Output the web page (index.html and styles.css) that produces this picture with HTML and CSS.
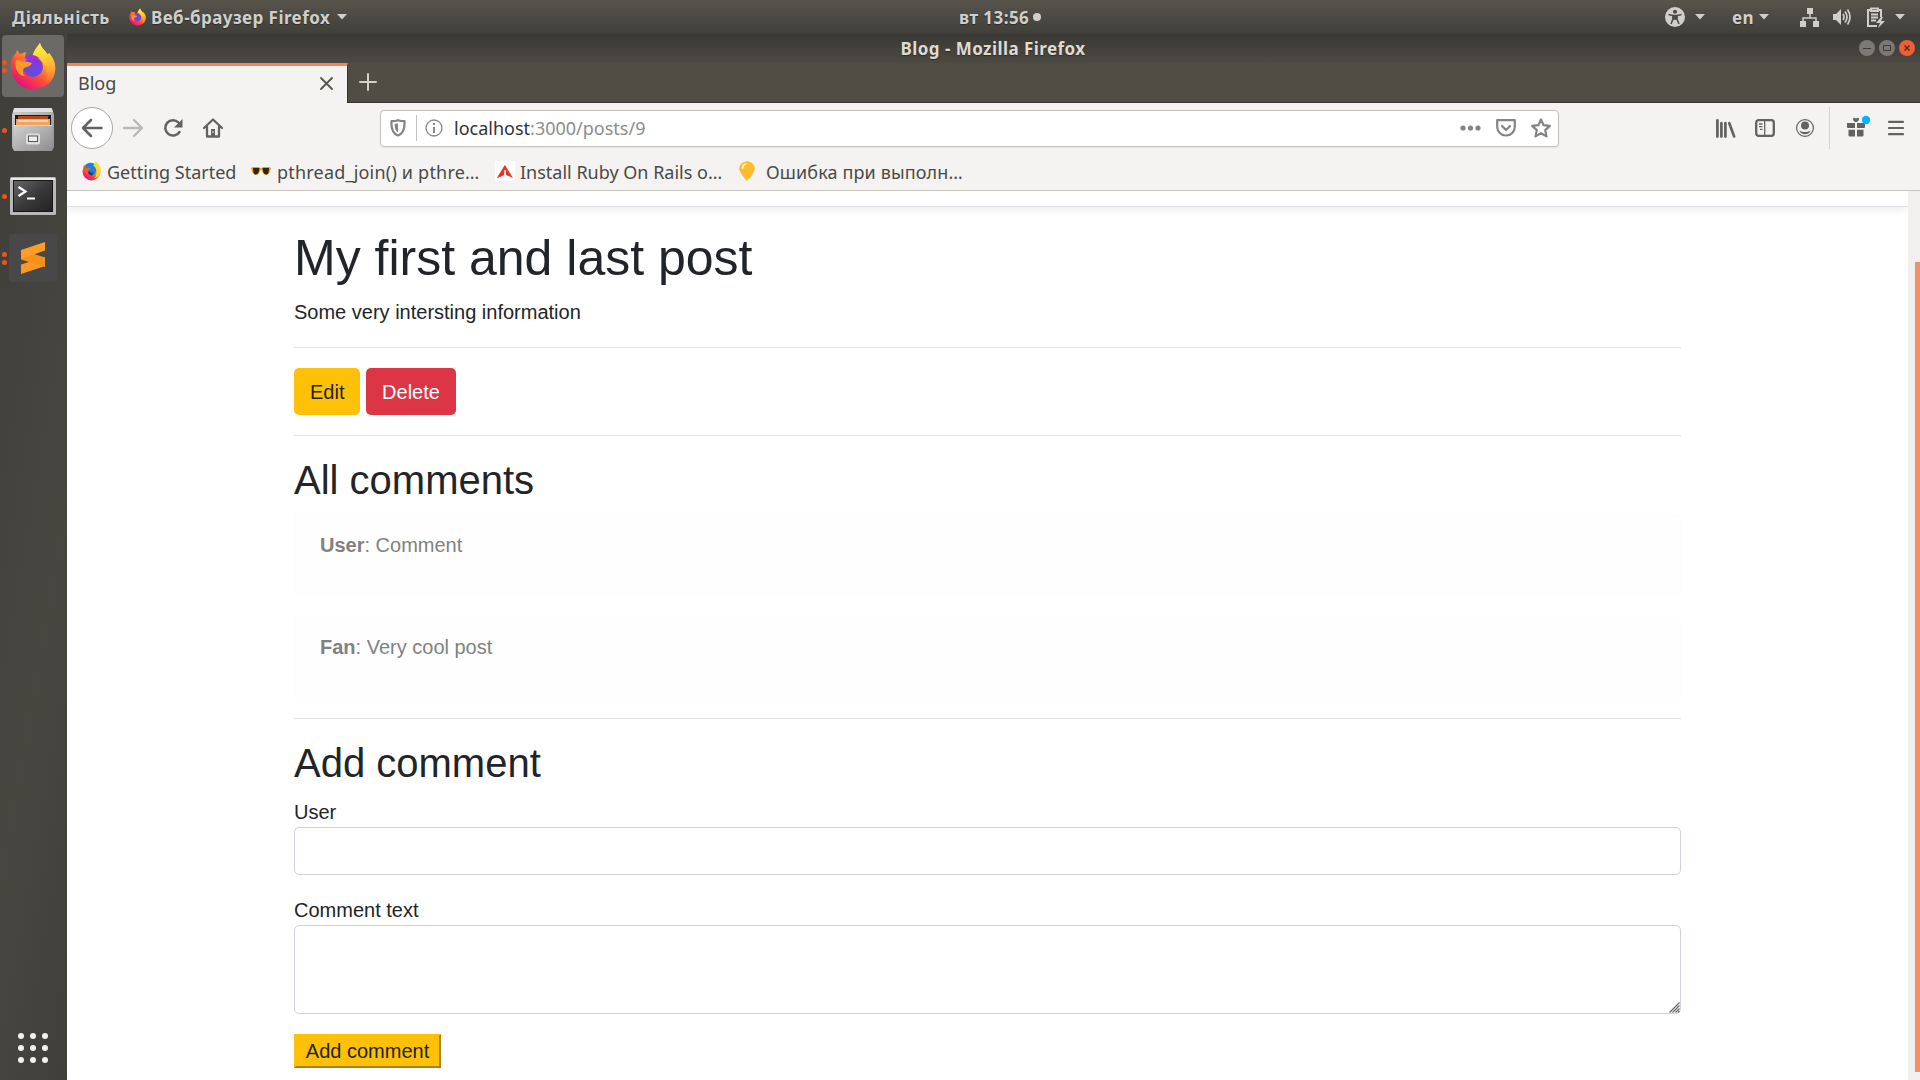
FILE: index.html
```html
<!DOCTYPE html>
<html lang="uk">
<head>
<meta charset="utf-8">
<title>Blog</title>
<link rel="stylesheet" href="styles.css">
</head>
<body>
<svg class="defs" width="0" height="0">
  <defs>
    <linearGradient id="fxFlame" x1=".85" y1=".1" x2=".25" y2=".95"><stop offset="0" stop-color="#fff44f"/><stop offset=".35" stop-color="#ffa32b"/><stop offset=".65" stop-color="#ff4b3a"/><stop offset="1" stop-color="#e5107c"/></linearGradient>
    <linearGradient id="fxTail" x1=".3" y1="0" x2=".5" y2="1"><stop offset="0" stop-color="#fff44f"/><stop offset=".5" stop-color="#ffc52f"/><stop offset="1" stop-color="#ff7139" stop-opacity="0"/></linearGradient>
    <linearGradient id="fxGlobe" x1=".7" y1="0" x2=".4" y2="1"><stop offset="0" stop-color="#9a28d8"/><stop offset=".5" stop-color="#7542e5"/><stop offset="1" stop-color="#5b50d8"/></linearGradient>
    <linearGradient id="steel" x1="0" y1="0" x2="1" y2="1"><stop offset="0" stop-color="#d0d0d0"/><stop offset="1" stop-color="#8e8e8e"/></linearGradient>
    <linearGradient id="screen" x1="0" y1="0" x2="1" y2="1"><stop offset="0" stop-color="#666"/><stop offset=".5" stop-color="#3a3a3a"/><stop offset="1" stop-color="#222"/></linearGradient>
    <symbol id="firefox" viewBox="0 0 46 48">
      <path d="M1 27C0 19 3 14 6 11l1-3 3 4 6-2-1 5 8 1C23 9 28 4 30 1c1 5 5 7 8 12l1-2c5 6 7 12 6 18-1 11-10 18-22 18S2 39 1 27z" fill="url(#fxFlame)"/>
      <path d="M22 16C23 9 28 4 30 1c1 5 5 7 8 12l1-2c5 6 7 12 6 18-2 8-6 12-12 14 6-8 5-17-1-24-3-2-6-3-10-3z" fill="url(#fxTail)"/>
      <circle cx="23" cy="25" r="10" fill="url(#fxGlobe)"/>
      <path d="M6 18c4 1 10 1 16 3-1 3-5 4-8 5-2 3-1 6 1 8-7 0-11-8-9-16z" fill="#ff9a28"/>
      <path d="M14 16c4-4 12-4 16 1-4-2-7-1-8 2z" fill="#a42de0"/>
    </symbol>
    <symbol id="caret" viewBox="0 0 10 6"><path d="M0 0h10L5 5.500z" fill="currentColor"/></symbol>
  </defs>
</svg>
<div class="desktop">
  <header class="panel">
    <div class="panel-side">
      <span class="panel-text activities">Діяльність</span>
      <svg class="panel-fx" width="17" height="18"><use href="#firefox"/></svg>
      <span class="panel-text app-name">Веб-браузер Firefox</span>
      <svg class="caret" width="10" height="6"><use href="#caret"/></svg>
    </div>
    <div class="panel-clock"><span class="panel-text clock">вт 13:56</span><i class="clock-dot"></i></div>
    <div class="panel-side panel-end">
      <svg width="20" height="20" viewBox="0 0 20 20"><circle cx="10" cy="10" r="10" fill="#d0cfcc"/><circle cx="10" cy="4.800" r="2" fill="#4a4943"/><path d="M3.500 7.500L8 8.500v3.500L6 17M16.500 7.500L12 8.500v3.500l2 5" fill="none" stroke="#4a4943" stroke-width="1.500"/><path d="M7.500 7.800h5v5h-5z" fill="#4a4943"/></svg>
      <svg class="caret c1" width="10" height="6"><use href="#caret"/></svg>
      <span class="panel-text lang">en</span>
      <svg class="caret c2" width="10" height="6"><use href="#caret"/></svg>
      <svg class="net" width="20" height="20" viewBox="0 0 20 20"><path d="M7 1h6v6H7zM0 14h6v6H0zM13 14h6v6h-6z" fill="#d0cfcc"/><path d="M10 7v4M3 14v-3h13v3" fill="none" stroke="#d0cfcc" stroke-width="1.500"/></svg>
      <svg class="vol" width="20" height="20" viewBox="0 0 20 20"><path d="M1 7h3l5-5v16l-5-5H1z" fill="#d0cfcc"/><path d="M11 7q2 3 0 6M13 4.500q4 5.500 0 11M15.500 2.500q5 7.500 0 15" fill="none" stroke="#d0cfcc" stroke-width="1.700"/></svg>
      <svg class="bat" width="20" height="21" viewBox="0 0 20 21"><path d="M5 3H2v16h9M12 3h3v7M5 1.500h7V4H5zM5 7.500h7M5 10.500h7M5 13.500h5" fill="none" stroke="#d0cfcc" stroke-width="2"/><path d="M15 10l-5 6h4l-2 5 7-7h-4l2-4z" fill="#d0cfcc"/></svg>
      <svg class="caret c3" width="10" height="6"><use href="#caret"/></svg>
    </div>
  </header>

  <div class="workspace">
    <nav class="dock">
      <div class="dock-item active"><span class="dots"><i></i><i></i></span><svg width="46" height="48"><use href="#firefox"/></svg></div>
      <div class="dock-item files"><span class="dots"><i></i></span>
        <svg width="42" height="46" viewBox="0 0 42 46"><path d="M2 1h38l2 7v32l-2 4H2l-2-4V8z" fill="url(#steel)"/><path d="M3 1h36l2 4H1z" fill="#e2e2e2"/><path d="M3 8h36v12H3z" fill="#1f1a17"/><path d="M6 9h30v3H6z" fill="#b54a18"/><path d="M4 12h34v6H4z" fill="#f3a45b"/><path d="M6 14h30" stroke="#fff"/><path d="M2 18h38v26H2z" fill="url(#steel)"/><path d="M2 18.500h38" stroke="#ddd"/><rect x="14" y="26.500" width="14" height="11" rx="2" fill="#ddd"/><rect x="16.500" y="29" width="9" height="5.500" fill="#eee" stroke="#555"/></svg></div>
      <div class="dock-item term"><span class="dots"><i></i></span>
        <svg width="46" height="38" viewBox="0 0 46 38"><rect width="46" height="38" rx="1.500" fill="#b9b9b9"/><path d="M1 1h44v2H1z" fill="#e9e9e9"/><rect x="3.500" y="3.500" width="39" height="31" fill="url(#screen)" stroke="#161616"/><path d="M8.500 10l7 4.500-7 4.500" fill="none" stroke="#fff" stroke-width="2.200"/><path d="M17 21.500h8" stroke="#fff" stroke-width="2"/></svg></div>
      <div class="dock-item subl"><span class="dots"><i></i><i></i></span>
        <svg width="48" height="48" viewBox="0 0 48 48"><rect width="48" height="48" rx="3" fill="#484848"/><path d="M12 30.500l24-7.500v9L12 40z" fill="#ff9820"/><path d="M12 16v9.500L36 33v-9.500L22 19z" fill="#f5901c"/><path d="M12 16l24-8v8.500L12 25z" fill="#ff9e22"/></svg></div>
      <svg class="apps" width="30" height="30" viewBox="0 0 30 30" fill="#f2f1ef"><circle cx="3" cy="3" r="3"/><circle cx="15" cy="3" r="3"/><circle cx="27" cy="3" r="3"/><circle cx="3" cy="15" r="3"/><circle cx="15" cy="15" r="3"/><circle cx="27" cy="15" r="3"/><circle cx="3" cy="27" r="3"/><circle cx="15" cy="27" r="3"/><circle cx="27" cy="27" r="3"/></svg>
    </nav>

    <section class="window">
      <div class="titlebar">
        <span class="window-title">Blog - Mozilla Firefox</span>
        <div class="controls">
          <svg width="16" height="16" viewBox="0 0 16 16"><circle cx="8" cy="8" r="8" fill="#7b7973"/><path d="M4 8.500h8" stroke="#3c3b37"/></svg>
          <svg width="16" height="16" viewBox="0 0 16 16"><circle cx="8" cy="8" r="8" fill="#7b7973"/><path d="M4.500 5.500h7v5h-7z" fill="none" stroke="#3c3b37"/></svg>
          <svg width="16" height="16" viewBox="0 0 16 16"><circle cx="8" cy="8" r="8" fill="#ee5f33"/><path d="M5.500 5.500l5 5m0-5l-5 5" stroke="#4a2a1c" stroke-width="1.300"/></svg>
        </div>
      </div>
      <div class="tabstrip">
        <div class="tab"><span class="ui tab-title">Blog</span>
          <svg width="13" height="13" viewBox="0 0 13 13"><path d="M1 1l11 11M12 1L1 12" stroke="#56554f" stroke-width="1.800" stroke-linecap="round"/></svg></div>
        <svg class="newtab" width="18" height="18" viewBox="0 0 18 18"><path d="M9 1v16M1 9h16" stroke="#d3d1c9" stroke-width="2" stroke-linecap="round"/></svg>
      </div>
      <div class="toolbar">
        <div class="nav-buttons">
          <span class="back"><svg width="22" height="20" viewBox="0 0 22 20"><path d="M20.500 10H2M10 2l-8 8 8 8" fill="none" stroke="#636261" stroke-width="2.500" stroke-linecap="round" stroke-linejoin="round"/></svg></span>
          <svg class="fwd" width="22" height="20" viewBox="0 0 22 20"><path d="M2 10h18M12 2l8 8-8 8" fill="none" stroke="#bab9b7" stroke-width="2.400" stroke-linecap="round" stroke-linejoin="round"/></svg>
          <svg class="reload" width="20" height="20" viewBox="0 0 20 20"><path d="M15.500 4.500A7.700 7.700 0 1 0 16.500 14" fill="none" stroke="#636261" stroke-width="2.500" stroke-linecap="round"/><path d="M19.500 1v8.500H11z" fill="#636261"/></svg>
          <svg class="home" width="20" height="20" viewBox="0 0 20 20"><path d="M1 10l9-8.500L19 10M4 9v9.500h12V9" fill="none" stroke="#636261" stroke-width="2.300" stroke-linejoin="round" stroke-linecap="round"/><path d="M8 11h4v8H8z" fill="#636261"/><path d="M10 13v2" stroke="#f4f3f2"/></svg>
        </div>
        <div class="urlbar">
          <svg class="shield" width="16" height="18" viewBox="0 0 16 18"><path d="M8 1.200c2 .8 4 1 6.500 1C15 9 13 14.500 8 16.500 3 14.500 1 9 1.500 2.200 4 2.200 6 2 8 1.200z" fill="none" stroke="#858483" stroke-width="2.200" stroke-linejoin="round"/><path d="M8 4.500v9C5.500 12 4.600 9 4.600 5z" fill="#858483"/></svg>
          <i class="url-sep"></i>
          <svg class="info" width="18" height="18" viewBox="0 0 18 18"><circle cx="9" cy="9" r="8" fill="none" stroke="#8a8988" stroke-width="1.300"/><path d="M9 4v2M9 8v6" stroke="#8a8988" stroke-width="2"/></svg>
          <span class="ui url"><b>localhost</b>:3000/posts/9</span>
          <svg class="more" width="21" height="6" viewBox="0 0 21 6" fill="#858483"><circle cx="3" cy="3" r="2.600"/><circle cx="10.500" cy="3" r="2.600"/><circle cx="18" cy="3" r="2.600"/></svg>
          <svg class="pocket" width="20" height="18" viewBox="0 0 20 18"><path d="M1.200 1.200h17.600v6.500a8.800 8.800 0 0 1-17.600 0z" fill="none" stroke="#858483" stroke-width="2.200" stroke-linejoin="round"/><path d="M6 7l4 4 4-4" fill="none" stroke="#858483" stroke-width="2.200" stroke-linecap="round" stroke-linejoin="round"/></svg>
          <svg class="star" width="20" height="20" viewBox="0 0 20 20"><path d="M10 1.500l2.600 5.700 6.200.7-4.600 4.200 1.300 6.300L10 15.200l-5.500 3.200 1.300-6.300L1.200 7.900l6.200-.7z" fill="none" stroke="#858483" stroke-width="2.200" stroke-linejoin="round"/></svg>
        </div>
        <div class="tools">
          <svg class="lib" width="20" height="19" viewBox="0 0 20 19"><path d="M1.400 1.400v16.200M5.400 4.200v13.400M9.400 4.200v13.400M13.300 4.200l4.800 13.200" stroke="#636261" stroke-width="2.700" stroke-linecap="round" fill="none"/></svg>
          <svg class="side" width="20" height="18" viewBox="0 0 20 18"><rect x="1.200" y="1.200" width="17.600" height="15.600" rx="2.500" fill="none" stroke="#636261" stroke-width="2.300"/><path d="M9.700 2v14M4 5h3.500M4 7.700h3.500M5 10.400h2.500" stroke="#636261" stroke-width="1.300"/></svg>
          <svg class="acct" width="18" height="18" viewBox="0 0 18 18"><circle cx="9" cy="9" r="8.400" fill="none" stroke="#636261" stroke-width="1.200"/><circle cx="9" cy="6.500" r="4" fill="#636261"/><path d="M3.500 11.500c3 2 8 2 11 0-1 5-10 5-11 0z" fill="#636261"/></svg>
          <i class="tool-sep"></i>
          <svg class="gift" width="25" height="22" viewBox="0 0 25 22"><path d="M0 8h8v5H1q-1 0-1-1zM10 8h8v4q0 1-1 1h-7zM1.500 14.800H8v6.700H3q-1.500 0-1.500-1.500zM10 14.800h6.500V20q0 1.500-1.500 1.500h-5zM6 3.200q2-1 3 .6 1-1.600 3-.6.500 2-2 3.800H8Q5.500 5.200 6 3.200z" fill="#636261"/><circle cx="19" cy="5" r="4.200" fill="#00b3ff"/></svg>
          <svg class="menu" width="16" height="16" viewBox="0 0 16 16"><path d="M1 1.800h14M1 8h14M1 14.200h14" stroke="#636261" stroke-width="2.200" stroke-linecap="round"/></svg>
        </div>
      </div>
      <div class="bookmarks">
        <svg class="bi1" width="19" height="20" viewBox="0 0 19 20"><circle cx="9.500" cy="10.500" r="9" fill="url(#fxFlame)"/><circle cx="8.500" cy="8" r="6.300" fill="#1484e0"/><path d="M13 0q6 4 5.700 10-.7 6-6.700 7.500 4-4.500 2-9.500-1-2.500-3-4 2.500 0 2-4z" fill="#ffd92e"/><path d="M1.500 4q2 1 3 3 2-1 4 .5 0 1.500-2 2 1 3 5 2-2 3.500-5.500 2.500Q1 11 1.500 4z" fill="#f9552f"/><path d="M7 9.500q2 3 5 2l-2 3q-3 0-4-2.500z" fill="#17408f"/></svg>
        <span class="ui b1">Getting Started</span>
        <svg class="bi2" width="20" height="9" viewBox="0 0 20 9"><path d="M0 1l2-1h6l2 1.500L12 0h6l2 1-1.500 4.500q-3 4.500-6.500.5l-1.500-3h-1L8 6Q4.500 10 1.500 5.500z" fill="#e0a31b"/><path d="M2 1h6.500L7.500 6Q4.500 9 2.500 6zM11.500 1H18l-.5 5q-2 3-5 0z" fill="#33230f"/></svg>
        <span class="ui b2">pthread_join() и pthre…</span>
        <svg class="bi3" width="20" height="20" viewBox="0 0 20 20"><path d="M0 0h20v20H0z" fill="#fff"/><path d="M10 4l8 13-7-3V9h-2v5l-7 3z" fill="#e0392b"/><path d="M10 4L9 14l-7 3z" fill="#e0392b"/></svg>
        <span class="ui b3">Install Ruby On Rails o…</span>
        <svg class="bi4" width="16" height="20" viewBox="0 0 16 20"><path d="M8 0q8 2 8 8-2 6-8 12Q2 14 0 8 0 2 8 0z" fill="#fbbd2c"/><path d="M3.500 7q.5-3 3-4" stroke="#fff0a8" stroke-width="2" fill="none" stroke-linecap="round"/></svg>
        <span class="ui b4">Ошибка при выполн…</span>
      </div>
      <div class="viewport">
        <div class="page">
          <div class="site-nav"></div>
          <main class="container">
            <h1>My first and last post</h1>
            <p>Some very intersting information</p>
            <hr>
            <div class="actions"><a class="btn edit">Edit</a><a class="btn delete">Delete</a></div>
            <hr>
            <h2>All comments</h2>
            <div class="alert"><p><b>User</b>: Comment</p></div>
            <div class="alert"><p><b>Fan</b>: Very cool post</p></div>
            <hr>
            <h2>Add comment</h2>
            <form>
              <label for="user">User</label>
              <input id="user" class="field" type="text">
              <label for="text">Comment text</label>
              <div class="area-wrap"><textarea id="text" class="field area"></textarea>
              <svg class="grip" width="11" height="11" viewBox="0 0 11 11"><path d="M.5 10.500l10-10M3.500 10.500l7-7M6.500 10.500l4-4M9 10.500L10.500 9" stroke="#666" stroke-width="1.200"/></svg></div>
              <button class="submit" type="button">Add comment</button>
            </form>
          </main>
        </div>
        <div class="scrollbar"><div class="thumb"></div></div>
      </div>
    </section>
  </div>
</div>
</body>
</html>
```
FILE: styles.css
```css
* { box-sizing: border-box; }
body { margin: 0; overflow: hidden; background: #fff; font-family: "Liberation Sans", Arial, sans-serif; }
svg { display: block; flex: none; }
.defs { position: absolute; }
.desktop { width: 1920px; height: 1080px; display: flex; flex-direction: column; overflow: hidden; }

.panel { height: 34px; flex: none; display: grid; grid-template-columns: 959px auto 1fr; align-items: center; background: linear-gradient(#57544c, #403f3a); color: #d0cfcc; }
.panel-side { display: flex; align-items: center; padding-left: 12px; }
.panel-end { justify-content: flex-end; padding: 0 15px 0 0; }
.panel-text, .window-title { font: bold 17px/24px "Noto Sans", sans-serif; letter-spacing: .45px; white-space: nowrap; text-shadow: 0 1px 1px #2c2b28; }
.panel-text { padding-top: 1px; }
.activities { width: 97px; margin-right: 20px; }
.panel-fx { margin-right: 5px; }
.app-name { width: 181px; }
.caret { margin-left: 5px; }
.panel-clock { display: flex; align-items: center; gap: 4px; }
.clock { width: 70px; }
.clock-dot { width: 8px; height: 8px; border-radius: 50%; background: #d0cfcc; }
.c1 { margin: 0 27px 0 10px; }
.lang { width: 22px; }
.c2 { margin: 0 31px 0 5px; }
.vol { margin-left: 12px; }
.bat { margin-left: 14px; }
.c3 { margin-left: 9px; }

.workspace { flex: 1; min-height: 0; display: flex; }
.dock { width: 67px; flex: none; display: flex; flex-direction: column; background: linear-gradient(100deg, #3f3e39, #47463f 60%, #403f3a); }
.dock-item { position: relative; display: flex; justify-content: center; align-items: center; }
.dock-item.active { width: 62px; height: 62px; margin: 1px 0 0 2px; border-radius: 4px; background: #6b6a67; }
.files { margin-top: 10px; width: 66px; }
.term { margin-top: 24px; width: 66px; }
.subl { margin-top: 19px; width: 66px; }
.dots { position: absolute; left: 2px; top: 0; bottom: 0; display: flex; flex-direction: column; justify-content: center; gap: 3px; }
.active .dots { left: 0; }
.dots i { width: 5px; height: 5px; border-radius: 50%; background: #e95420; }
.apps { margin: auto 0 17px 18px; }

.window { flex: 1; min-width: 0; display: flex; flex-direction: column; }
.titlebar { height: 29px; flex: none; display: grid; grid-template-columns: 1fr auto 1fr; background: linear-gradient(#393834, #4d4a43); color: #dfdbd2; }
.window-title { grid-column: 2; line-height: 30px; width: 186px; }
.controls { display: flex; gap: 4px; justify-content: flex-end; padding: 6px 5px 0 0; }
.tabstrip { height: 40px; flex: none; display: flex; align-items: flex-end; background: #504d45; border-bottom: 1px solid #35342f; }
.tab { width: 281px; height: 40px; margin-bottom: -1px; padding: 0 14px 3px 11px; display: flex; align-items: center; justify-content: space-between; background: #f4f3f2; border-top: 3px solid #f4845a; border-right: 1px solid #35342f; }
.newtab { margin: 0 0 11px 11px; }
.ui { font: 18px/26px "Noto Sans", sans-serif; color: #4a4947; white-space: nowrap; }

.toolbar { height: 50px; flex: none; display: flex; align-items: center; background: #f4f3f2; }
.nav-buttons { display: flex; align-items: center; width: 313px; padding-left: 4px; }
.back { width: 42px; height: 42px; border: 1px solid #a9a8a6; border-radius: 50%; background: #fff; display: flex; align-items: center; justify-content: center; }
.fwd { margin-left: 9px; }
.reload { margin-left: 19px; }
.home { margin-left: 20px; }
.urlbar { width: 1179px; height: 37px; display: flex; align-items: center; border: 1px solid #c5c1bd; border-radius: 4px; background: #fff; box-shadow: 0 1px 2px rgba(0,0,0,.06); padding: 0 7px 0 9px; }
.url-sep { width: 1px; height: 26px; background: #c4c3c1; margin: 0 8px 0 10px; }
.url { margin-left: 11px; flex: 1; color: #8e8d8b; }
.url b { font-weight: 400; color: #333; }
.pocket { margin-left: 15px; }
.star { margin-left: 15px; }
.tools { margin-left: auto; display: flex; align-items: center; padding-right: 16px; }
.side { margin-left: 19px; }
.acct { margin-left: 21px; }
.tool-sep { width: 1px; height: 42px; background: #d3d1ce; margin: 0 17px 0 15px; }
.gift { margin-top: -4px; }
.menu { margin-left: 16px; }
.bookmarks { height: 38px; flex: none; display: flex; align-items: center; background: #f4f3f2; border-bottom: 1px solid #c8c4c1; padding: 0 0 1px 15px; }
.bookmarks .ui { padding-top: 2px; }
.b1 { margin-left: 6px; width: 129px; }
.bi2 { margin-left: 15px; }
.b2 { margin-left: 6px; width: 203px; letter-spacing: .2px; }
.bi3 { margin-left: 15px; }
.b3 { margin-left: 5px; width: 202px; }
.bi4 { margin-left: 17px; }
.b4 { margin-left: 11px; letter-spacing: .12px; }

.viewport { flex: 1; min-height: 0; display: flex; overflow: hidden; }
.page { flex: 1; background: #fff; color: #212529; font-size: 20px; line-height: 30px; }
.site-nav { height: 16px; border-bottom: 1px solid #dee2e6; box-shadow: 0 3px 8px rgba(0,0,0,.08); }
.container { width: 1387px; margin: 21px 0 0 227px; }
h1, h2 { margin: 0 0 10px; font-weight: 400; line-height: 1.2; }
h1 { font-size: 50px; height: 60px; margin-bottom: 9px; }
h2 { font-size: 40px; }
p { margin: 0 0 20px; }
hr { border: 0; border-top: 1px solid #e3e3e3; margin: 20px 0; }
.actions { display: flex; gap: 6px; }
.btn { height: 47px; padding: 9px 16px; border-radius: 5px; line-height: 30px; text-align: center; }
.edit { width: 66px; background: #ffc107; }
.delete { width: 90px; background: #dc3545; color: #fff; }
.alert { border: 1px solid #fdfdfe; border-radius: 5px; background: #fefefe; color: #818182; padding: 15px 25px; margin-bottom: 20px; height: 82px; }
form { display: flex; flex-direction: column; align-items: flex-start; }
.field { width: 100%; height: 48px; border: 1px solid #ced4da; border-radius: 5px; background: #fff; display: block; margin-bottom: 20px; outline: 0; }
.area-wrap { position: relative; width: 100%; }
.area { height: 89px; resize: none; }
.grip { position: absolute; right: 1px; bottom: 21px; }
.submit { width: 147px; height: 34px; padding: 0; border: 2px solid; border-color: #ffc107 #ad8200 #ad8200 #ffc107; background: #ffc107; color: #212529; font: 20px/30px "Liberation Sans", sans-serif; }
.scrollbar { width: 12px; background: #f1f0ee; padding: 71px 0 8px 7px; }
.thumb { height: 100%; background: #f28e68; }
```
